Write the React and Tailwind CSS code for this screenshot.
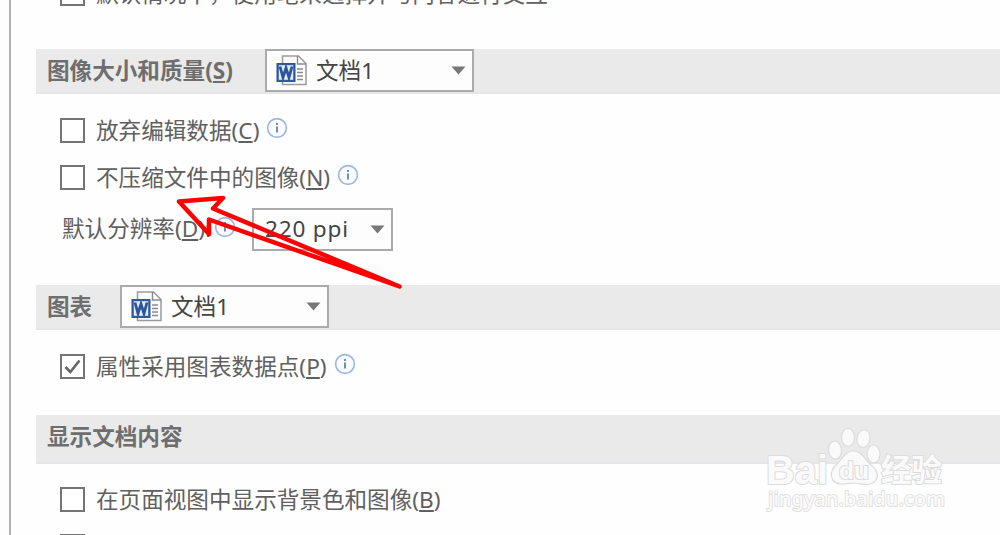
import React from "react";

const WordIcon = () => (
  <svg width="32" height="32" viewBox="0 0 32 32" fill="none" className="mb-[2px] shrink-0">
    <path d="M6.500 2H22.500L30 9.500V30.500H6.500Z" fill="#fdfdfd" stroke="#9a9a9a" strokeWidth="1.5" />
    <path d="M21.500 2V10H30" stroke="#8a8a8a" strokeWidth="1.4" />
    <path d="M21 15H27M21 18.500H27M21 22H27M21 25.500H27" stroke="#8a8a8a" strokeWidth="1.3" />
    <rect x="0.500" y="9" width="19" height="19" fill="#2b579a" />
    <path d="M2.200 10.700H17.800V26.300H2.200Z" fill="#e4ecf8" stroke="#2b579a" strokeWidth="1" />
    <path d="M4 12.500L7 23.500L10 14L13 23.500L16 12.500" stroke="#2b579a" strokeWidth="2.800" />
  </svg>
);

const InfoIcon = () => (
  <svg width="22" height="22" viewBox="0 0 22 22" fill="none" className="shrink-0">
    <circle cx="11" cy="11" r="9.4" fill="#fbfcff" stroke="#9bb7e0" strokeWidth="1.6" />
    <path d="M11 9.5V15.5" stroke="#5279b5" strokeWidth="1.7" />
    <path d="M11 6V8" stroke="#5279b5" strokeWidth="1.7" />
  </svg>
);

const Label = ({ text, hotkey, suffix }) => (
  <span className="whitespace-nowrap">
    {text}
    {hotkey && (
      <>
        (<span className="underline decoration-[1.5px] underline-offset-[2px]">{hotkey}</span>)
      </>
    )}
    {suffix}
  </span>
);

const Select = ({ icon, value, className }) => (
  <div
    className={`flex h-[43px] shrink-0 items-center border-2 border-[#ababab] bg-[#fdfdfd] text-[#444] ${className}`}
  >
    {icon && <WordIcon />}
    <span className={icon ? "ml-[8px]" : "ml-[11px] tracking-[0.8px]"}>{value}</span>
    <svg width="15" height="9" viewBox="0 0 15 9" className="mr-[6px] ml-auto">
      <path d="M0.5 0.5H14.5L7.5 8.5Z" fill="#777" />
    </svg>
  </div>
);

const Checkbox = ({ checked }) => (
  <span className="flex size-[25px] shrink-0 items-center justify-center border-2 border-[#747474] bg-white">
    {checked && (
      <svg width="19" height="19" viewBox="0 0 19 19" fill="none">
        <path d="M2.5 10L7.3 15L16.5 3.5" stroke="#666" strokeWidth="2.6" />
      </svg>
    )}
  </span>
);

const Option = ({ text, hotkey, checked, info }) => (
  <div className="flex h-[47px] items-center pl-[24px]">
    <Checkbox checked={checked} />
    <span className="ml-[11px]">
      <Label text={text} hotkey={hotkey} />
    </span>
    {info && (
      <span className="mb-[6px] ml-[7px]">
        <InfoIcon />
      </span>
    )}
  </div>
);

const SectionHeader = ({ text, hotkey, children, className }) => (
  <div
    className={`flex border-b-2 border-[#e5e5ea] bg-[#eaeaea] pl-[11px] ${className}`}
  >
    <span className="flex h-[43px] items-center font-bold text-[#6e6e6e]">
      <Label text={text} hotkey={hotkey} />
    </span>
    {children}
  </div>
);

const Toe = ({ cx, cy, rotate }) => (
  <ellipse cx={cx} cy={cy} rx="6.5" ry="9" transform={`rotate(${rotate} ${cx} ${cy})`} />
);

const Watermark = () => (
  <svg
    width="190"
    height="95"
    viewBox="0 0 190 95"
    className="absolute top-[423px] left-[762px]"
    fill="#fafafa"
    stroke="#dcdcdc"
    strokeWidth="1.2"
  >
    <Toe cx={73} cy={27} rotate={-6} />
    <Toe cx={86} cy={14.5} rotate={0} />
    <Toe cx={101.500} cy={15.5} rotate={10} />
    <Toe cx={111.500} cy={31} rotate={0} />
    <path d="M91 28C84 28 81 35 75 41C66 49 68 61 80 61C85 61 88 60 92 60C98 60 102 63 108 61C118 58 117 48 109 42C102 36 100 28 91 28Z" />
    <g className="font-['Liberation_Sans','Noto_Sans_CJK_SC',sans-serif] font-bold" paintOrder="stroke">
      <text x="4" y="61" fontSize="40" textLength="62" lengthAdjust="spacingAndGlyphs" strokeWidth="2">
        Bai
      </text>
      <text x="77" y="56" fontSize="23" textLength="30" lengthAdjust="spacingAndGlyphs" strokeWidth="2">
        du
      </text>
      <text x="119" y="58" fontSize="30.5" strokeWidth="2">
        经验
      </text>
    </g>
    <text
      x="6"
      y="83"
      fontSize="20"
      textLength="177"
      lengthAdjust="spacingAndGlyphs"
      paintOrder="stroke"
      strokeWidth="1.6"
      className="font-['Noto_Sans',sans-serif] font-medium"
    >
      jingyan.baidu.com
    </text>
  </svg>
);

const App = () => {
  return (
    <div className="relative h-[535px] w-[1000px] overflow-hidden bg-[#fefefe] font-['Noto_Sans','Noto_Sans_CJK_SC',sans-serif] text-[22.6px] leading-[30px] text-[#606060]">
      <div className="ml-[9px] flex h-[565px] flex-col border-l-2 border-[#b3b3b3] pl-[25px]">
        {/* Pen option, scrolled half out of view */}
        <div className="-mt-[30px] h-[79px] shrink-0">
          <Option text="默认情况下，使用笔来选择并与内容进行交互" />
        </div>

        {/* Image size and quality */}
        <SectionHeader text="图像大小和质量" hotkey="S" className="h-[45px] shrink-0">
          <Select icon value="文档1" className="mr-[526px] ml-auto w-[209px] pl-[9px]" />
        </SectionHeader>
        <div className="h-[191px] shrink-0 pt-[13px]">
          <Option text="放弃编辑数据" hotkey="C" info />
          <Option text="不压缩文件中的图像" hotkey="N" info />
          <div className="flex h-[56px] items-center pl-[26px]">
            <Label text="默认分辨率" hotkey="D" suffix=":" />
            <span className="mb-[4px] ml-[3px]">
              <InfoIcon />
            </span>
            <Select value="220 ppi" className="mr-[607px] ml-auto w-[141px]" />
          </div>
        </div>

        {/* Chart */}
        <SectionHeader text="图表" className="h-[45px] shrink-0">
          <Select icon value="文档1" className="mr-[671px] ml-auto w-[209px] pl-[9px]" />
        </SectionHeader>
        <div className="h-[85px] shrink-0 pt-[13px]">
          <Option text="属性采用图表数据点" hotkey="P" checked info />
        </div>

        {/* Document content */}
        <SectionHeader text="显示文档内容" className="h-[49px] shrink-0" />
        <div className="shrink-0 pt-[12px]">
          <Option text="在页面视图中显示背景色和图像" hotkey="B" />
          <div className="pt-[11px] pl-[24px]">
            <Checkbox />
          </div>
        </div>
      </div>

      {/* Arrow pointing at the compression option */}
      <svg
        width="240"
        height="110"
        viewBox="170 185 240 110"
        fill="none"
        className="absolute top-[185px] left-[170px]"
      >
        <path
          d="M399.5 286.5L213 208.5L223 198L179 201.5L209 234L209 219.5Z"
          stroke="#ff0000"
          strokeWidth="4.5"
          strokeLinejoin="round"
        />
      </svg>

      <Watermark />
    </div>
  );
};

export default App;
